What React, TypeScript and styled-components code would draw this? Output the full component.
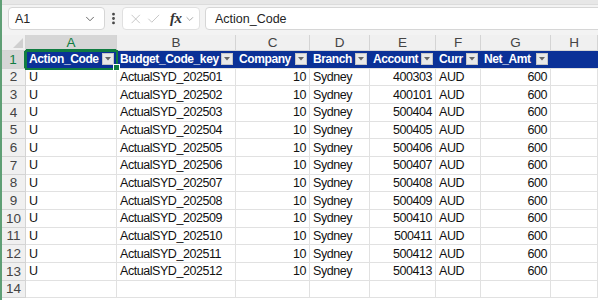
import React from 'react';
import styled, { createGlobalStyle } from 'styled-components';
import { ChevronDown, EllipsisVertical, X, Check } from 'lucide-react';

// Sheet data
//----------------------------------------------
const columns = [
  { key: 'A', width: 91 },
  { key: 'B', width: 119 },
  { key: 'C', width: 74 },
  { key: 'D', width: 60 },
  { key: 'E', width: 66 },
  { key: 'F', width: 45 },
  { key: 'G', width: 70 },
  { key: 'H', width: 0 },
];

const headers = [
  'Action_Code',
  'Budget_Code_key',
  'Company',
  'Branch',
  'Account',
  'Curr',
  'Net_Amt',
];

const accounts = [
  '400303',
  '400101',
  '500404',
  '500405',
  '500406',
  '500407',
  '500408',
  '500409',
  '500410',
  '500411',
  '500412',
  '500413',
];

type Align = 'left' | 'right';

type Row = Array<{ text: string; align: Align }>;

const rows: Array<Row> = accounts.map((account, i) => [
  { text: 'U', align: 'left' },
  { text: `ActualSYD_2025${String(i + 1).padStart(2, '0')}`, align: 'left' },
  { text: '10', align: 'right' },
  { text: 'Sydney', align: 'left' },
  { text: account, align: 'right' },
  { text: 'AUD', align: 'left' },
  { text: '600', align: 'right' },
  { text: '', align: 'left' },
]);

const GREEN = '#107c41';
const BLUE = '#0b3197';

const App: React.FC = () => {
  return (
    <>
      <GlobalStyle />
      <DivPage>
        <DivTopStrip />
        <DivFormulaBar>
          <DivNameBox>
            <span>A1</span>
            <ChevronDown size={14} strokeWidth={1.5} />
          </DivNameBox>
          <DivDots>
            <EllipsisVertical size={15} strokeWidth={2.5} />
          </DivDots>
          <DivFxBox>
            <X size={16} strokeWidth={1.2} />
            <Check size={16} strokeWidth={1.2} />
            <SpanFx>fx</SpanFx>
            <ChevronDown size={12} strokeWidth={1.5} />
          </DivFxBox>
          <DivFormulaInput>Action_Code</DivFormulaInput>
        </DivFormulaBar>

        <DivGrid>
          <DivCorner />
          {columns.map((col) => (
            <DivColHeader key={col.key} $selected={col.key === 'A'}>
              {col.key}
            </DivColHeader>
          ))}

          <DivRowHeader $selected>1</DivRowHeader>
          {columns.map((col, i) => (
            <DivHeadCell key={col.key} $selected={i === 0}>
              {headers[i] && (
                <>
                  <span>{headers[i]}</span>
                  <DivFilter>
                    <svg width="6" height="4" viewBox="0 0 6 4">
                      <path d="M0 0 H6 L3 3.5 Z" fill="#666" />
                    </svg>
                  </DivFilter>
                </>
              )}
            </DivHeadCell>
          ))}

          {rows.map((row, r) => (
            <React.Fragment key={r}>
              <DivRowHeader>{r + 2}</DivRowHeader>
              {row.map((cell, c) => (
                <DivCell key={c} $align={cell.align}>
                  {cell.text}
                </DivCell>
              ))}
            </React.Fragment>
          ))}

          <DivRowHeader>14</DivRowHeader>
          {columns.map((col) => (
            <DivCell key={col.key} $align="left" />
          ))}
        </DivGrid>
      </DivPage>
    </>
  );
};

const GlobalStyle = createGlobalStyle`
  html, body {
    margin: 0;
    padding: 0;
    overflow: hidden;
    background: #ffffff;
  }
`;

const DivPage = styled.div`
  width: 598px;
  height: 300px;
  box-sizing: border-box;
  border-left: 2px solid #5f9f75;
  background: #f3f3f3;
  overflow: hidden;
  display: flex;
  flex-direction: column;
`;

const DivTopStrip = styled.div`
  height: 5px;
  flex: none;
  background: #e7e7e7;
  border-bottom: 1px solid #dcdcdc;
  box-sizing: border-box;
`;

const DivFormulaBar = styled.div`
  height: 30px;
  flex: none;
  box-sizing: border-box;
  padding: 2px 0 0 6px;
  display: flex;
  align-items: flex-start;
  font-family: 'Liberation Sans', Arial, sans-serif;
  font-size: 12.5px;
  color: #242424;
`;

const DivNameBox = styled.div`
  width: 97px;
  height: 23px;
  box-sizing: border-box;
  background: #ffffff;
  border: 1px solid #d6d6d6;
  border-radius: 4px;
  display: flex;
  align-items: center;
  justify-content: space-between;
  padding: 0 7px 0 6px;

  svg {
    color: #555;
  }
`;

const DivDots = styled.div`
  width: 16px;
  height: 23px;
  display: flex;
  align-items: center;
  justify-content: center;
  color: #444;
`;

const DivFxBox = styled.div`
  width: 78px;
  height: 23px;
  box-sizing: border-box;
  margin-left: 1px;
  background: #ffffff;
  border: 1px solid #e0e0e0;
  border-radius: 4px;
  display: flex;
  align-items: center;
  gap: 3px;
  padding: 0 3px 0 5px;
  color: #b8b8b8;

  svg:last-child {
    color: #888;
  }
`;

const SpanFx = styled.span`
  font-family: 'Liberation Serif', 'Times New Roman', serif;
  font-style: italic;
  font-size: 15px;
  font-weight: 700;
  color: #333;
  margin-left: 5px;
  letter-spacing: -0.5px;
`;

const DivFormulaInput = styled.div`
  flex: 1;
  height: 23px;
  box-sizing: border-box;
  margin-left: 5px;
  margin-right: -8px;
  background: #ffffff;
  border: 1px solid #d6d6d6;
  border-radius: 4px;
  display: flex;
  align-items: center;
  padding-left: 9px;
`;

const DivGrid = styled.div`
  flex: 1;
  display: grid;
  grid-template-columns: 24px ${columns
      .filter((c) => c.width > 0)
      .map((c) => `${c.width}px`)
      .join(' ')} 1fr;
  grid-template-rows: 16px;
  grid-auto-rows: 17.67px;
  background: #ffffff;
  font-family: 'Liberation Sans', Arial, sans-serif;
  font-size: 12.5px;
  letter-spacing: -0.45px;
  color: #111;
`;

const DivCorner = styled.div`
  background: #f0f0f0;
  border-right: 1px solid #d4d4d4;
  border-bottom: 1px solid #d4d4d4;
  box-sizing: border-box;
  position: relative;

  &::after {
    content: '';
    position: absolute;
    right: 2px;
    bottom: 2px;
    border-left: 10px solid transparent;
    border-bottom: 10px solid #cfcfcf;
  }
`;

const DivColHeader = styled.div<{ $selected?: boolean }>`
  box-sizing: border-box;
  background: ${(p) => (p.$selected ? '#d6d6d6' : '#f0f0f0')};
  color: ${(p) => (p.$selected ? GREEN : '#444')};
  border-right: 1px solid #d4d4d4;
  border-bottom: ${(p) => (p.$selected ? `2px solid ${GREEN}` : '1px solid #d4d4d4')};
  display: flex;
  align-items: center;
  justify-content: center;
  font-size: 13.5px;
  letter-spacing: 0;
`;

const DivRowHeader = styled.div<{ $selected?: boolean }>`
  box-sizing: border-box;
  background: ${(p) => (p.$selected ? '#d6d6d6' : '#f0f0f0')};
  color: ${(p) => (p.$selected ? GREEN : '#444')};
  border-right: ${(p) => (p.$selected ? `2px solid ${GREEN}` : '1px solid #d4d4d4')};
  border-bottom: 1px solid #d4d4d4;
  display: flex;
  align-items: center;
  justify-content: center;
  font-size: 13.5px;
  letter-spacing: 0;
`;

const DivHeadCell = styled.div<{ $selected?: boolean }>`
  box-sizing: border-box;
  position: relative;
  background: ${BLUE};
  color: #ffffff;
  font-weight: 700;
  font-size: 12px;
  letter-spacing: -0.4px;
  border-bottom: 1px solid #e1e1e1;
  display: flex;
  align-items: center;
  justify-content: space-between;
  padding: 0 3px 0 3px;
  white-space: nowrap;
  outline: ${(p) => (p.$selected ? `2px solid ${GREEN}` : 'none')};
  outline-offset: -1px;
  z-index: ${(p) => (p.$selected ? 1 : 0)};

  &::after {
    content: '';
    display: ${(p) => (p.$selected ? 'block' : 'none')};
    position: absolute;
    right: -3px;
    bottom: -3px;
    width: 5px;
    height: 5px;
    background: ${GREEN};
    border: 1px solid #ffffff;
  }
`;

const DivFilter = styled.div`
  width: 12px;
  height: 12px;
  box-sizing: border-box;
  flex: none;
  background: #e9e9e9;
  border: 1px solid #c6c6c6;
  display: flex;
  align-items: center;
  justify-content: center;
`;

const DivCell = styled.div<{ $align: Align }>`
  box-sizing: border-box;
  border-right: 1px solid #e1e1e1;
  border-bottom: 1px solid #e1e1e1;
  display: flex;
  align-items: center;
  justify-content: ${(p) => (p.$align === 'right' ? 'flex-end' : 'flex-start')};
  padding: 0 3px;
  white-space: nowrap;
  overflow: hidden;
`;

export default App;
